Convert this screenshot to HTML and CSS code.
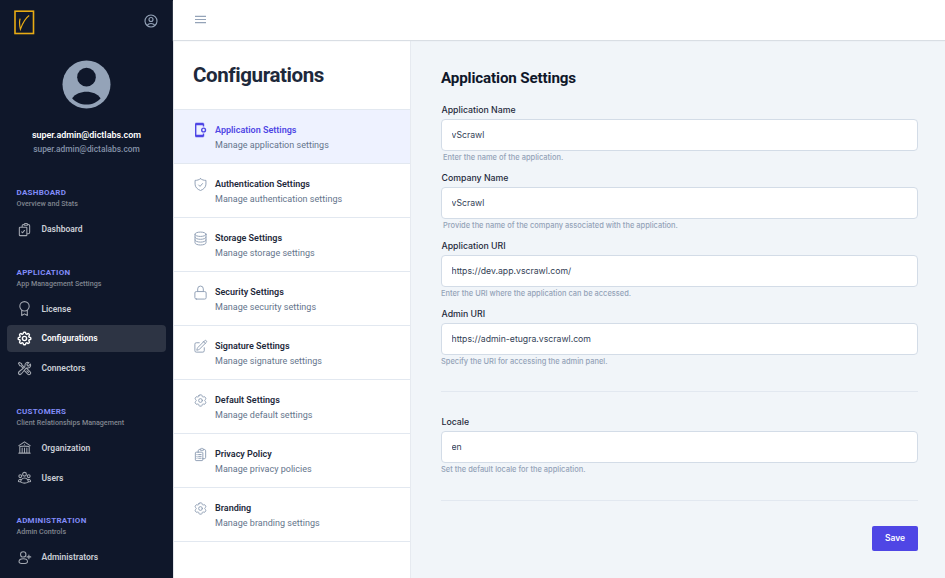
FILE: index.html
```html
<!DOCTYPE html>
<html lang="en">
<head>
<meta charset="utf-8">
<title>Configurations</title>
<link rel="stylesheet" href="styles.css">
</head>
<body>
<svg class="sprite" aria-hidden="true">
  <symbol id="user-circle" viewBox="0 0 24 24"><path d="M17.982 18.725A7.488 7.488 0 0 0 12 15.75a7.488 7.488 0 0 0-5.982 2.975m11.963 0a9 9 0 1 0-11.963 0m11.963 0A8.966 8.966 0 0 1 12 21a8.966 8.966 0 0 1-5.982-2.275M15 9.75a3 3 0 1 1-6 0 3 3 0 0 1 6 0Z"/></symbol>
  <symbol id="clipboard-check" viewBox="0 0 24 24"><path d="M11.35 3.836c-.065.21-.1.433-.1.664 0 .414.336.75.75.75h4.5a.75.75 0 0 0 .75-.75 2.25 2.25 0 0 0-.1-.664m-5.8 0A2.251 2.251 0 0 1 13.5 2.25H15c1.012 0 1.867.668 2.15 1.586m-5.8 0c-.376.023-.75.05-1.124.08C9.095 4.01 8.25 4.973 8.25 6.108V8.25m8.9-4.414c.376.023.75.05 1.124.08 1.131.094 1.976 1.057 1.976 2.192V16.5A2.25 2.25 0 0 1 18 18.75h-2.25m-7.5-10.5H4.875c-.621 0-1.125.504-1.125 1.125v11.25c0 .621.504 1.125 1.125 1.125h9.75c.621 0 1.125-.504 1.125-1.125V18.75m-7.5-10.5h6.375c.621 0 1.125.504 1.125 1.125v9.375m-8.25-3 1.5 1.5 3-3.75"/></symbol>
  <symbol id="clipboard-list" viewBox="0 0 24 24"><path d="M11.35 3.836c-.065.21-.1.433-.1.664 0 .414.336.75.75.75h4.5a.75.75 0 0 0 .75-.75 2.25 2.25 0 0 0-.1-.664m-5.8 0A2.251 2.251 0 0 1 13.5 2.25H15c1.012 0 1.867.668 2.15 1.586m-5.8 0c-.376.023-.75.05-1.124.08C9.095 4.01 8.25 4.973 8.25 6.108V8.25m8.9-4.414c.376.023.75.05 1.124.08 1.131.094 1.976 1.057 1.976 2.192V16.5A2.25 2.25 0 0 1 18 18.75h-2.25m-7.5-10.5H4.875c-.621 0-1.125.504-1.125 1.125v11.25c0 .621.504 1.125 1.125 1.125h9.75c.621 0 1.125-.504 1.125-1.125V18.75m-7.5-10.5h6.375c.621 0 1.125.504 1.125 1.125v9.375M6.75 12h.008v.008H6.75V12Zm0 3h.008v.008H6.75V15Zm0 3h.008v.008H6.75V18ZM9 12h4M9 15h4M9 18h4"/></symbol>
  <symbol id="award" viewBox="0 0 24 24"><circle cx="12" cy="8.500" r="7.500"/><path d="M7.500 14.800v8.400l4.500-2.600 4.500 2.600v-8.400"/></symbol>
  <symbol id="cog-8" viewBox="0 0 24 24"><path d="M10.343 3.94c.09-.542.56-.94 1.11-.94h1.093c.55 0 1.02.398 1.11.94l.149.894c.07.424.384.764.78.93.398.164.855.142 1.205-.108l.737-.527a1.125 1.125 0 0 1 1.45.12l.773.774c.39.389.44 1.002.12 1.45l-.527.737c-.25.35-.272.806-.107 1.204.165.397.505.71.93.78l.893.15c.543.09.94.559.94 1.109v1.094c0 .55-.397 1.02-.94 1.11l-.894.149c-.424.07-.764.383-.929.78-.165.398-.143.854.107 1.204l.527.738c.32.447.269 1.06-.12 1.45l-.774.773a1.125 1.125 0 0 1-1.449.12l-.738-.527c-.35-.25-.806-.272-1.203-.107-.398.165-.71.505-.781.929l-.149.894c-.09.542-.56.94-1.11.94h-1.094c-.55 0-1.019-.398-1.11-.94l-.148-.894c-.071-.424-.384-.764-.781-.93-.398-.164-.854-.142-1.204.108l-.738.527c-.447.32-1.06.269-1.45-.12l-.773-.774a1.125 1.125 0 0 1-.12-1.45l.527-.737c.25-.35.272-.806.108-1.204-.165-.397-.506-.71-.93-.78l-.894-.15c-.542-.09-.94-.56-.94-1.109v-1.094c0-.55.398-1.02.94-1.11l.894-.149c.424-.07.765-.383.93-.78.165-.398.143-.854-.108-1.204l-.526-.738a1.125 1.125 0 0 1 .12-1.45l.773-.773a1.125 1.125 0 0 1 1.45-.12l.737.527c.35.25.807.272 1.204.107.397-.165.71-.505.78-.929l.15-.894Z"/><path d="M15 12a3 3 0 1 1-6 0 3 3 0 0 1 6 0Z"/></symbol>
  <symbol id="cog-6" viewBox="0 0 24 24"><path d="M9.594 3.94c.09-.542.56-.94 1.11-.94h2.593c.55 0 1.02.398 1.11.94l.213 1.281c.063.374.313.686.645.87.074.04.147.083.22.127.325.196.72.257 1.075.124l1.217-.456a1.125 1.125 0 0 1 1.37.49l1.296 2.247a1.125 1.125 0 0 1-.26 1.431l-1.003.827c-.293.241-.438.613-.43.992a7.723 7.723 0 0 1 0 .255c-.008.378.137.75.43.991l1.004.827c.424.35.534.955.26 1.43l-1.298 2.247a1.125 1.125 0 0 1-1.369.491l-1.217-.456c-.355-.133-.75-.072-1.076.124a6.47 6.47 0 0 1-.22.128c-.331.183-.581.495-.644.869l-.213 1.281c-.09.543-.56.94-1.11.94h-2.594c-.55 0-1.019-.398-1.11-.94l-.213-1.281c-.062-.374-.312-.686-.644-.87a6.52 6.52 0 0 1-.22-.127c-.325-.196-.72-.257-1.076-.124l-1.217.456a1.125 1.125 0 0 1-1.369-.49l-1.297-2.247a1.125 1.125 0 0 1 .26-1.431l1.004-.827c.292-.24.437-.613.43-.991a6.932 6.932 0 0 1 0-.255c.007-.38-.138-.751-.43-.992l-1.004-.827a1.125 1.125 0 0 1-.26-1.43l1.297-2.247a1.125 1.125 0 0 1 1.37-.491l1.216.456c.356.133.751.072 1.076-.124.072-.044.146-.086.22-.128.332-.183.582-.495.644-.869l.214-1.28Z"/><path d="M15 12a3 3 0 1 1-6 0 3 3 0 0 1 6 0Z"/></symbol>
  <symbol id="tools" viewBox="0 0 24 24"><path d="M11.42 15.17 17.25 21A2.652 2.652 0 0 0 21 17.25l-5.877-5.877M11.42 15.17l2.496-3.03c.317-.384.74-.626 1.208-.766M11.42 15.17l-4.655 5.653a2.548 2.548 0 1 1-3.586-3.586l6.837-5.63m5.108-.233c.55-.164 1.163-.188 1.743-.14a4.5 4.5 0 0 0 4.486-6.336l-3.276 3.277a3.004 3.004 0 0 1-2.25-2.25l3.276-3.276a4.5 4.5 0 0 0-6.336 4.486c.091 1.076-.071 2.264-.904 2.95l-.102.085m-1.745 1.437L5.909 7.5H4.5L2.25 3.75l1.5-1.5L7.5 4.5v1.409l4.26 4.26m-1.745 1.437 1.745-1.437m6.615 8.206L15.75 15.75M4.867 19.125h.008v.008h-.008v-.008Z"/></symbol>
  <symbol id="library" viewBox="0 0 24 24"><path d="M12 21v-8.25M15.75 21v-8.25M8.25 21v-8.25M3 9l9-6 9 6m-1.5 12V10.332A48.36 48.36 0 0 0 12 9.75c-2.551 0-5.056.2-7.5.582V21M3 21h18M12 6.75h.008v.008H12V6.75Z"/></symbol>
  <symbol id="users" viewBox="0 0 24 24"><path d="M18 18.72a9.094 9.094 0 0 0 3.741-.479 3 3 0 0 0-4.682-2.72m.94 3.198.001.031c0 .225-.012.447-.037.666A11.944 11.944 0 0 1 12 21c-2.17 0-4.207-.576-5.963-1.584A6.062 6.062 0 0 1 6 18.719m12 0a5.971 5.971 0 0 0-.941-3.197m0 0A5.995 5.995 0 0 0 12 12.75a5.995 5.995 0 0 0-5.058 2.772m0 0a3 3 0 0 0-4.681 2.72 8.986 8.986 0 0 0 3.74.477m.94-3.197a5.971 5.971 0 0 0-.94 3.197M15 6.75a3 3 0 1 1-6 0 3 3 0 0 1 6 0Zm6 3a2.25 2.25 0 1 1-4.5 0 2.25 2.25 0 0 1 4.5 0Zm-13.5 0a2.25 2.25 0 1 1-4.5 0 2.25 2.25 0 0 1 4.5 0Z"/></symbol>
  <symbol id="user-plus" viewBox="0 0 24 24"><circle cx="10" cy="7" r="4.3"/><path d="M10 14c-4 0-6.8 2-6.8 4.6 0 2 2 3 6.800 3s6.800-1 6.800-3C16.800 16 14 14 10 14ZM19 8v6M16 11h6"/></symbol>
  <symbol id="shield" viewBox="0 0 24 24"><path d="m9 12.750 2.250 2.250 4-4.500M12 2.700c2.400 1.900 5.200 2.700 8.700 2.700v6c0 4.700-3.500 8.300-8.700 10.200-5.200-1.900-8.700-5.500-8.700-10.200v-6c3.500 0 6.300-.8 8.700-2.700Z"/></symbol>
  <symbol id="database" viewBox="0 0 24 24"><path d="M20.800 5.200c0 2-3.900 3.500-8.800 3.500S3.200 7.200 3.200 5.200 7.100 1.700 12 1.700s8.800 1.500 8.800 3.500Zm0 0v13.600c0 2-3.900 3.600-8.800 3.600s-8.800-1.600-8.800-3.600V5.200m17.600 4.600c0 2-3.900 3.500-8.800 3.500s-8.800-1.500-8.800-3.500m17.600 4.500c0 2-3.900 3.500-8.800 3.500s-8.800-1.500-8.800-3.500"/></symbol>
  <symbol id="lock" viewBox="0 0 24 24"><path d="M16.500 10.500V6.200a4.500 4.500 0 1 0-9 0v4.300m-2.200 12h13.400a2.250 2.250 0 0 0 2.300-2.250v-7.500a2.250 2.250 0 0 0-2.300-2.250H5.300A2.250 2.250 0 0 0 3 12.750v7.500a2.250 2.250 0 0 0 2.300 2.250Z"/></symbol>
  <symbol id="pencil" viewBox="0 0 24 24"><path d="m16.862 4.487 1.687-1.688a1.875 1.875 0 1 1 2.652 2.652L10.582 16.070a4.500 4.500 0 0 1-1.897 1.130L6 18l.800-2.685a4.500 4.500 0 0 1 1.130-1.897l8.932-8.931Zm0 0L19.500 7.125M18 14v4.750A2.250 2.250 0 0 1 15.750 21H5.250A2.250 2.250 0 0 1 3 18.750V8.250A2.250 2.250 0 0 1 5.250 6H10"/></symbol>
</svg>
<div class="app">
  <aside class="sidebar">
    <div class="brand">
      <svg class="logo" viewBox="0 0 21 25"><rect x="1" y="1.200" width="18.500" height="22.300"/><path d="M6.100 8.600c-1 3.300-.7 6.400.3 10.600C8.400 14 10.800 8.600 15.200 5.600"/></svg>
      <svg class="icon account"><use href="#user-circle"/></svg>
    </div>
    <svg class="avatar" viewBox="0 0 50 50"><circle cx="25" cy="25" r="24.500"/><circle class="hole" cx="25" cy="17.500" r="9.500"/><path class="hole" d="M10.300 39c3.500-4.300 8.800-6.500 14.700-6.500s11 2.200 14.400 6.500C35.800 43.300 30.800 45.400 25 45.400S14 43.300 10.300 39Z"/></svg>
    <div class="user-name">super.admin@dictlabs.com</div>
    <div class="user-mail">super.admin@dictalabs.com</div>
    <nav class="menu">
      <section class="group">
        <h3>DASHBOARD</h3><p>Overview and Stats</p>
        <a class="link"><svg class="icon"><use href="#clipboard-check"/></svg>Dashboard</a>
      </section>
      <section class="group">
        <h3>APPLICATION</h3><p>App Management Settings</p>
        <a class="link"><svg class="icon"><use href="#award"/></svg>License</a>
        <a class="link active"><svg class="icon"><use href="#cog-8"/></svg>Configurations</a>
        <a class="link"><svg class="icon"><use href="#tools"/></svg>Connectors</a>
      </section>
      <section class="group">
        <h3>CUSTOMERS</h3><p>Client Relationships Management</p>
        <a class="link"><svg class="icon"><use href="#library"/></svg>Organization</a>
        <a class="link"><svg class="icon"><use href="#users"/></svg>Users</a>
      </section>
      <section class="group">
        <h3>ADMINISTRATION</h3><p>Admin Controls</p>
        <a class="link"><svg class="icon"><use href="#user-plus"/></svg>Administrators</a>
      </section>
    </nav>
  </aside>
  <div class="main">
    <header class="topbar"><svg class="burger" viewBox="0 0 12 9"><path d="M0 1h12M0 4.500h12M0 8h12"/></svg></header>
    <div class="columns">
      <div class="panel">
        <h1>Configurations</h1>
        <div class="entry selected"><svg class="device" viewBox="0 0 14 16"><path d="M10.500 4.500V2.200H2.700v11.600h7.800v-2.300"/><path class="bar" d="M2.500 2h8M2.500 14h8"/><circle cx="10.600" cy="8" r="1.900"/></svg><div><h4>Application Settings</h4><p>Manage application settings</p></div></div>
        <div class="entry"><svg class="icon"><use href="#shield"/></svg><div><h4>Authentication Settings</h4><p>Manage authentication settings</p></div></div>
        <div class="entry"><svg class="icon"><use href="#database"/></svg><div><h4>Storage Settings</h4><p>Manage storage settings</p></div></div>
        <div class="entry"><svg class="icon"><use href="#lock"/></svg><div><h4>Security Settings</h4><p>Manage security settings</p></div></div>
        <div class="entry"><svg class="icon"><use href="#pencil"/></svg><div><h4>Signature Settings</h4><p>Manage signature settings</p></div></div>
        <div class="entry"><svg class="icon"><use href="#cog-6"/></svg><div><h4>Default Settings</h4><p>Manage default settings</p></div></div>
        <div class="entry"><svg class="icon"><use href="#clipboard-list"/></svg><div><h4>Privacy Policy</h4><p>Manage privacy policies</p></div></div>
        <div class="entry"><svg class="icon"><use href="#cog-6"/></svg><div><h4>Branding</h4><p>Manage branding settings</p></div></div>
      </div>
      <form class="form">
        <h2>Application Settings</h2>
        <div class="field"><label for="name">Application Name</label><input id="name" value="vScrawl"><p class="inset">Enter the name of the application.</p></div>
        <div class="field"><label for="company">Company Name</label><input id="company" value="vScrawl"><p class="inset">Provide the name of the company associated with the application.</p></div>
        <div class="field"><label for="uri">Application URI</label><input id="uri" value="https://dev.app.vscrawl.com/"><p>Enter the URI where the application can be accessed.</p></div>
        <div class="field"><label for="admin">Admin URI</label><input id="admin" value="https://admin-etugra.vscrawl.com"><p>Specify the URI for accessing the admin panel.</p></div>
        <hr>
        <div class="field locale"><label for="locale">Locale</label><input id="locale" value="en"><p>Set the default locale for the application.</p></div>
        <hr>
        <button type="button">Save</button>
      </form>
    </div>
  </div>
</div>
</body>
</html>
```
FILE: styles.css
```css
* { box-sizing: border-box; margin: 0; padding: 0; }
body { font-family: Roboto, sans-serif; overflow: hidden; background: #f1f5f9; }
.sprite { display: none; }
.app { display: flex; height: 578px; overflow: hidden; }
svg { flex: none; display: block; }
.icon { width: 15px; height: 15px; fill: none; stroke: currentColor; stroke-width: 1.5; stroke-linecap: round; stroke-linejoin: round; }

.sidebar { width: 173px; flex: none; background: #0f172a; color: #fff; overflow: hidden; }
.brand { display: flex; justify-content: space-between; align-items: flex-start; padding: 10px 14.500px 0 14px; height: 60px; }
.logo { width: 21px; height: 25px; fill: none; stroke: #e8ab14; stroke-width: 1.600; }
.logo path { stroke-width: 1.200; }
.account { width: 16px; height: 16px; margin-top: 3px; color: #94a3b8; stroke-width: 1.700; }
.avatar { width: 49px; height: 49px; margin: 0 auto; fill: #94a3b8; }
.avatar .hole { fill: #0f172a; }
.user-name, .user-mail { text-align: center; white-space: nowrap; line-height: 14px; }
.user-name { margin-top: 19px; font-size: 8.950px; font-weight: 600; }
.user-mail { font-size: 8.400px; font-weight: 500; color: #8492a8; }
.menu { margin-top: 31px; }
.group { padding-bottom: 21.200px; }
.group h3 { font-size: 8px; letter-spacing: .27px; line-height: 11px; font-weight: 700; color: #818cf8; padding-left: 16.500px; }
.group p { font-size: 7.150px; line-height: 11px; font-weight: 500; color: #80858f; padding-left: 16.500px; margin-bottom: 6.500px; }
.link { display: flex; align-items: center; height: 27px; margin: 0 7px 2.900px; padding-left: 9.500px; gap: 10px; border-radius: 4px; font-size: 8.500px; font-weight: 600; color: #cbcfd6; }
.link .icon { color: #a2a7b0; stroke-width: 1.700; }
.link.active { background: #2d3444; color: #fff; }
.link.active .icon { color: #fff; stroke-width: 2; transform: scale(1.120); }

.main { flex: 1; display: flex; flex-direction: column; min-width: 0; }
.topbar { height: 40px; background: #fff; padding: 15px 0 0 22px; box-shadow: 0 1px 1px #d9dee4; z-index: 1; }
.burger { width: 11px; height: 9px; fill: none; stroke: #94a3b8; stroke-width: 1.300; }
.columns { flex: 1; display: flex; min-height: 0; }
.panel { width: 238px; flex: none; background: #fff; border-right: 1px solid #e6eaf0; border-left: 1px solid #e2e5ea; }
h1 { height: 69px; padding: 20.500px 0 0 19px; font-size: 20.500px; line-height: 28px; font-weight: 700; letter-spacing: -.4px; color: #1e293b; }
.entry { height: 54px; display: flex; gap: 7px; padding: 14px 0 0 19px; border-bottom: 1px solid #e2e8f0; color: #94a3b8; }
.entry .icon { stroke-width: 1.600; margin-top: -1.500px; }
.entry h4 { font-size: 9px; line-height: 12px; font-weight: 600; color: #1e293b; }
.entry p { font-size: 9px; line-height: 12px; margin-top: 3px; color: #64748b; letter-spacing: .02px; }
.entry.selected { background: #eef2ff; height: 55px; border-top: 1px solid #e2e8f0; color: #4f46e5; }
.selected h4 { color: #4f46e5; }
.device { width: 14px; height: 16px; margin: -2px 1px 0 0; fill: none; stroke: currentColor; stroke-width: 1.400; }
.device .bar { stroke-width: 2.400; }

.form { flex: 1; padding: 28px 27px 0 30px; display: flex; flex-direction: column; font-family: Inter, sans-serif; }
h2 { font-family: Roboto, sans-serif; font-size: 15.200px; line-height: 20px; font-weight: 700; letter-spacing: -.15px; color: #0f172a; margin-bottom: 16px; }
.field { height: 68px; flex: none; }
.field label { display: block; font-size: 8.750px; line-height: 12px; font-weight: 500; color: #1e293b; padding-left: .5px; }
.field input { display: block; width: 100%; height: 32px; margin-top: 3px; padding: 0 9.500px; border: 1px solid #d3dce7; border-radius: 4px; background: #fff; font: 400 8.700px Inter, sans-serif; color: #334155; outline: 0; }
.field p { font-size: 7.480px; line-height: 10px; margin-top: 2px; font-weight: 500; color: #94a3b8; white-space: nowrap; }
.field .inset { padding-left: 2px; }
hr { border: 0; border-top: 1px solid #e2e8f0; margin: 15px 0 24px; flex: none; }
.locale { height: 69px; }
.locale + hr { margin-bottom: 24.500px; }
button { align-self: flex-end; width: 46px; height: 25px; border: 0; border-radius: 2px; background: #4f46e5; color: #fff; font: 600 8.500px Inter, sans-serif; flex: none; }
```
